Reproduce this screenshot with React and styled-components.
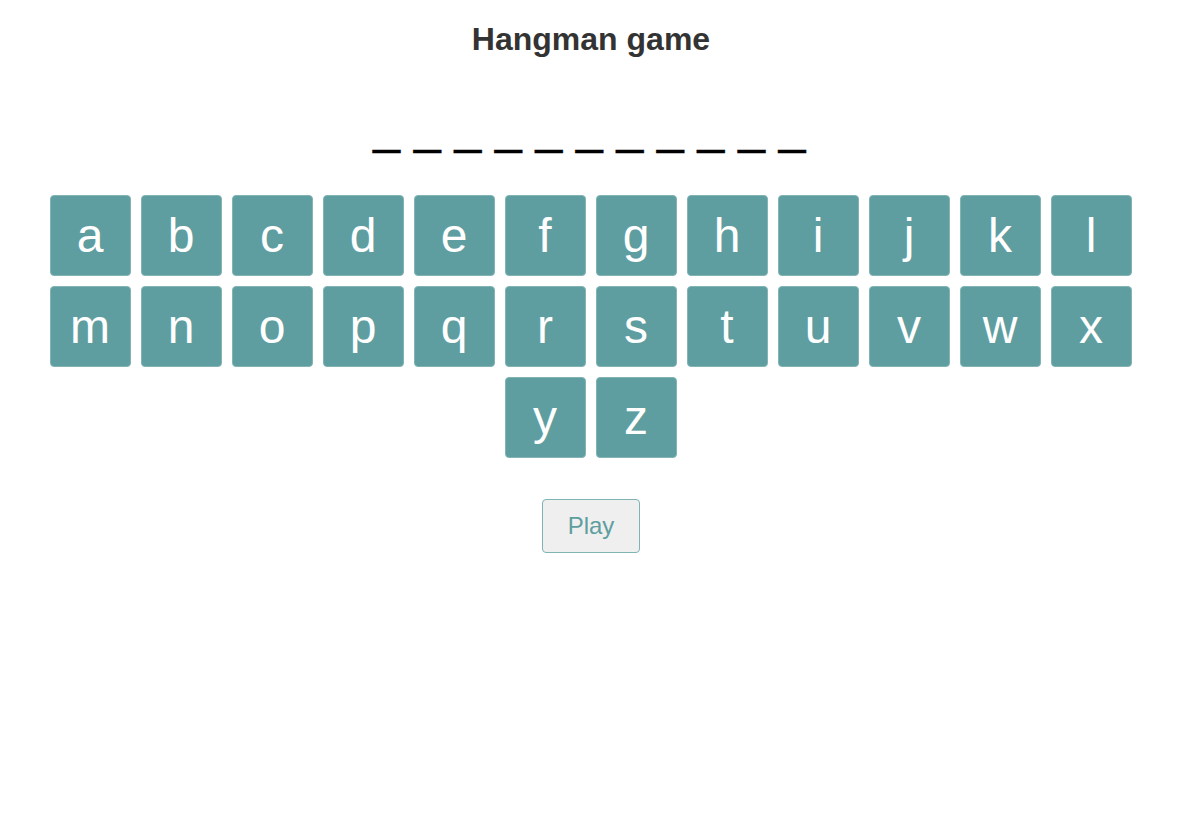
import React from 'react'
import styled, { createGlobalStyle } from 'styled-components'

const letters = 'abcdefghijklmnopqrstuvwxyz'.split('')
const wordLength = 11

export const App = () => {
  return (
    <>
      <GlobalStyle />
      <Container>
        <Title>Hangman game</Title>
        <Word>{Array(wordLength).fill('_').join(' ')}</Word>
        <Keyboard>
          {letters.map((letter) => (
            <Key key={letter}>{letter}</Key>
          ))}
        </Keyboard>
        <PlayButton>Play</PlayButton>
      </Container>
    </>
  )
}

export default App

const GlobalStyle = createGlobalStyle`
  body {
    margin: 0;
    background: #fff;
    font-family: "Liberation Sans", Arial, sans-serif;
  }
`

const Container = styled.div`
  display: flex;
  flex-direction: column;
  align-items: center;
  text-align: center;
`

const Title = styled.h1`
  margin: 21px 0 0;
  font-size: 32px;
  font-weight: 700;
  color: #333;
`

const Word = styled.div`
  margin-top: 41px;
  margin-left: -3px;
  font-size: 48px;
  line-height: 55px;
  letter-spacing: 0.25px;
  color: #000;
  white-space: pre;
  -webkit-text-stroke: 0.5px #000;
`

const Keyboard = styled.div`
  display: flex;
  flex-wrap: wrap;
  justify-content: center;
  width: 1094px;
  margin-top: 36px;
  margin-left: -1px;
`

const Key = styled.button`
  width: 81px;
  height: 81px;
  margin: 5px;
  padding: 0;
  border: 1px solid #82b4b5;
  border-radius: 4px;
  background-color: #5f9ea0;
  color: #fff;
  font-family: "Liberation Sans", Arial, sans-serif;
  font-size: 48px;
  cursor: pointer;
`

const PlayButton = styled.button`
  margin-top: 36px;
  padding: 12px 25px;
  border: 1px solid #7fb3b4;
  border-radius: 4px;
  background-color: #efefef;
  color: #5f9ea0;
  font-family: "Liberation Sans", Arial, sans-serif;
  font-size: 24px;
  cursor: pointer;
`
